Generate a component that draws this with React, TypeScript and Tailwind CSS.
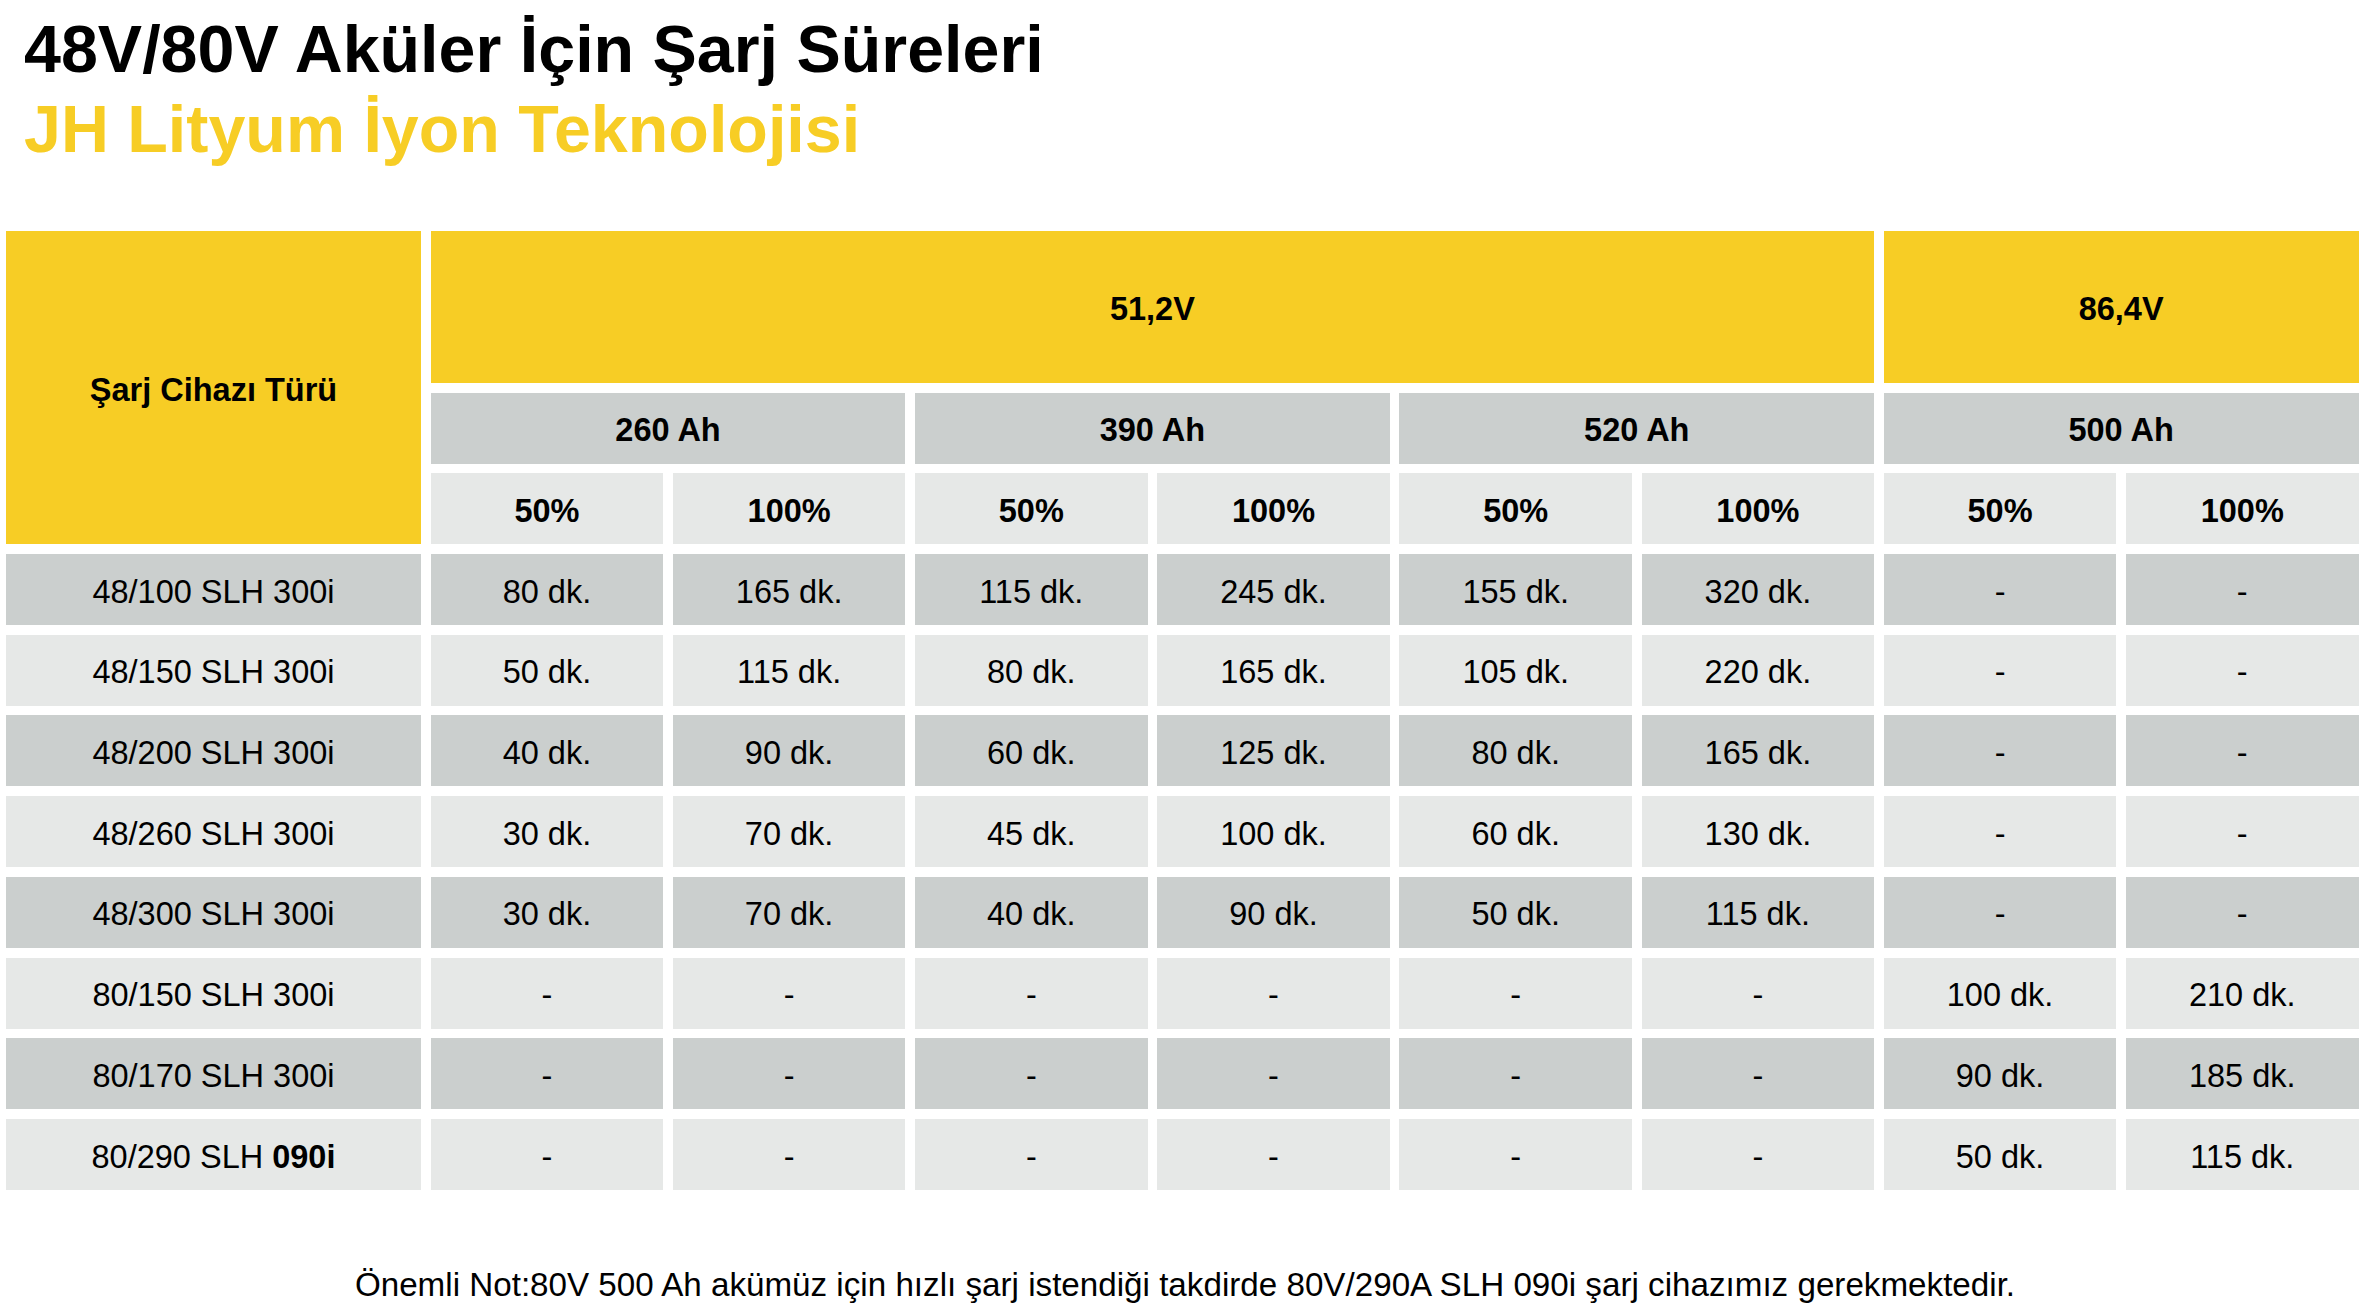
const YELLOW = "bg-[#f7cd25]";

type Row = { name: React.ReactNode; vals: string[] };

const rows: Row[] = [
  { name: "48/100 SLH 300i", vals: ["80 dk.", "165 dk.", "115 dk.", "245 dk.", "155 dk.", "320 dk.", "-", "-"] },
  { name: "48/150 SLH 300i", vals: ["50 dk.", "115 dk.", "80 dk.", "165 dk.", "105 dk.", "220 dk.", "-", "-"] },
  { name: "48/200 SLH 300i", vals: ["40 dk.", "90 dk.", "60 dk.", "125 dk.", "80 dk.", "165 dk.", "-", "-"] },
  { name: "48/260 SLH 300i", vals: ["30 dk.", "70 dk.", "45 dk.", "100 dk.", "60 dk.", "130 dk.", "-", "-"] },
  { name: "48/300 SLH 300i", vals: ["30 dk.", "70 dk.", "40 dk.", "90 dk.", "50 dk.", "115 dk.", "-", "-"] },
  { name: "80/150 SLH 300i", vals: ["-", "-", "-", "-", "-", "-", "100 dk.", "210 dk."] },
  { name: "80/170 SLH 300i", vals: ["-", "-", "-", "-", "-", "-", "90 dk.", "185 dk."] },
  {
    name: (
      <span>
        80/290 SLH <b className="font-bold">090i</b>
      </span>
    ),
    vals: ["-", "-", "-", "-", "-", "-", "50 dk.", "115 dk."],
  },
];

const cell = "flex items-center justify-center text-center pt-[5px]";

export default function App() {
  return (
    <div className="w-[2370px] h-[1316px] bg-white text-black overflow-hidden font-['Liberation_Sans',Arial,sans-serif]">
      <div className="pt-[9px] pl-[24px] text-[66.4px] leading-[80px] font-bold">
        <h1>48V/80V Aküler İçin Şarj Süreleri</h1>
        <h2 className="text-[#f7cd25]">JH Lityum İyon Teknolojisi</h2>
      </div>

      <div className="mt-[62px] ml-[6px] grid grid-cols-[415px_repeat(8,232.5px)] grid-rows-[152px_repeat(10,71px)] gap-[9.7px] text-[32.5px]">
        <div className={`${cell} ${YELLOW} row-span-3 font-bold`}>Şarj Cihazı Türü</div>
        <div className={`${cell} ${YELLOW} col-span-6 font-bold`}>51,2V</div>
        <div className={`${cell} ${YELLOW} col-span-2 font-bold`}>86,4V</div>

        {["260 Ah", "390 Ah", "520 Ah", "500 Ah"].map((a) => (
          <div key={a} className={`${cell} col-span-2 bg-[#cbcfce] font-bold`}>
            {a}
          </div>
        ))}

        {[0, 1, 2, 3, 4, 5, 6, 7].map((i) => (
          <div key={i} className={`${cell} bg-[#e6e8e7] font-bold`}>
            {i % 2 === 0 ? "50%" : "100%"}
          </div>
        ))}

        {rows.map((r, ri) => {
          const bg = ri % 2 === 0 ? "bg-[#cbcfce]" : "bg-[#e6e8e7]";
          return (
            <div key={ri} className="contents">
              <div className={`${cell} ${bg}`}>{r.name}</div>
              {r.vals.map((v, vi) => (
                <div key={vi} className={`${cell} ${bg}`}>
                  {v}
                </div>
              ))}
            </div>
          );
        })}
      </div>

      <p className="mt-[75px] text-center text-[33.2px] leading-[40px]">
        Önemli Not:80V 500 Ah akümüz için hızlı şarj istendiği takdirde 80V/290A SLH 090i şarj cihazımız gerekmektedir.
      </p>
    </div>
  );
}
